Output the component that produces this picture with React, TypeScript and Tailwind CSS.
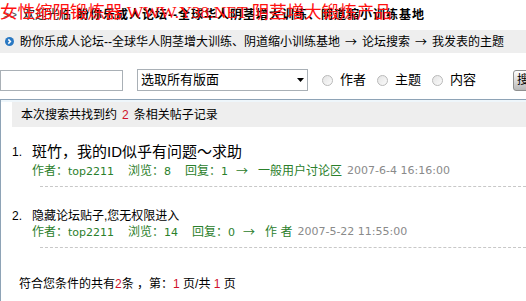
import React from "react";

const CJK = '"Liberation Sans", "Noto Sans CJK SC", sans-serif';
const LATIN = '"DejaVu Sans", "Noto Sans CJK SC", sans-serif';
const ARROW = '"Noto Sans CJK SC", sans-serif';

function Radio({ label }: { label: string }) {
	return (
		<label className="flex shrink-0 items-center">
			<span className="h-[11px] w-[11px] rounded-full border border-[#b9b9b9] bg-gradient-to-br from-[#e4e4e4] to-[#fbfbfb]" />
			<span className="ml-[7px]">{label}</span>
		</label>
	);
}

function Num({ children }: { children: React.ReactNode }) {
	return (
		<span className="text-[11px]" style={{ fontFamily: LATIN }}>
			{children}
		</span>
	);
}

function Arrow({ className }: { className?: string }) {
	return (
		<span className={className} style={{ fontFamily: ARROW }}>
			→
		</span>
	);
}

function Meta({
	author,
	views,
	replies,
	board,
	date,
}: {
	author: string;
	views: number;
	replies: number;
	board: string;
	date: string;
}) {
	return (
		<div className="flex h-[16px] items-center whitespace-nowrap text-[12px] leading-[16px] text-[#2b802b]">
			<span>
				作者：<Num>{author}</Num>
			</span>
			<span className="ml-[14px]">
				浏览：<Num>{views}</Num>
			</span>
			<span className="ml-[14px]">
				回复：<Num>{replies}</Num>
			</span>
			<Arrow className="ml-[8px]" />
			<span className="ml-[10px]">{board}</span>
			<span className="ml-[5px] text-[11px] text-[#8a8a8a]" style={{ fontFamily: LATIN }}>
				{date}
			</span>
		</div>
	);
}

export default function App() {
	return (
		<div
			className="relative h-[301px] w-[526px] overflow-hidden bg-white text-[12px] text-black"
			style={{ fontFamily: CJK }}>
			{/* welcome line */}
			<div className="flex h-[30px] items-center whitespace-nowrap pl-[3px] leading-none">
				<span className="text-[#555]">&gt;&gt;</span>
				<span className="ml-[6px]">欢迎光临</span>
				<span className="ml-[6px] font-bold tracking-[1px]">
					盼你乐成人论坛--全球华人阴茎增大训练、阴道缩小训练基地
				</span>
			</div>
			<div
				className="absolute left-0 top-[2px] whitespace-nowrap text-[17.5px] leading-[20px] text-[#ff1010]"
				style={{ fontFamily: '"Liberation Serif", "Noto Sans CJK SC", serif' }}>
				女性缩阴锻炼器 WWW.Y38.NET 阴茎增大锻炼产品
			</div>

			{/* breadcrumb */}
			<div className="flex h-[23px] items-center whitespace-nowrap bg-[#eeeeee] pl-[5px]">
				<svg width="9" height="9" viewBox="0 0 9 9" className="shrink-0">
					<circle cx="4.5" cy="4.5" r="4.5" fill="#2a78c2" />
					<path d="M3.3 2.4 L5.4 4.5 L3.3 6.6" stroke="#fff" strokeWidth="1.5" fill="none" />
				</svg>
				<span className="ml-[6px] text-[12px]">盼你乐成人论坛--全球华人阴茎增大训练、阴道缩小训练基地</span>
				<Arrow className="mx-[5px]" />
				<span>论坛搜索</span>
				<Arrow className="mx-[5px]" />
				<span>我发表的主题</span>
			</div>

			{/* search form */}
			<div className="mt-[16px] flex h-[22px] items-center whitespace-nowrap">
				<div className="h-[21px] w-[123px] shrink-0 border border-[#a9b0b6] bg-white" />
				<div className="ml-[14px] flex h-[22px] w-[171px] shrink-0 items-center border border-[#a9b0b6] pl-[3px] text-[13px]">
					<span className="flex-1">选取所有版面</span>
					<svg width="7" height="4" viewBox="0 0 7 4" className="mr-[3px]">
						<path d="M0 0 H7 L3.5 4 Z" fill="#000" />
					</svg>
				</div>
				<div className="ml-[14px] flex shrink-0 items-center gap-[11px] text-[13px]">
					<Radio label="作者" />
					<Radio label="主题" />
					<Radio label="内容" />
				</div>
				<div className="ml-[37px] flex h-[21px] w-[40px] shrink-0 items-center rounded-[3px] border border-[#8f8f8f] bg-gradient-to-b from-[#ffffff] to-[#b8b8b8] pl-[3px] text-[12px]">
					搜索
				</div>
			</div>

			{/* results panel */}
			<div className="mt-[8px] border-l border-t border-[#8ea3b6]">
				<div className="h-[2px] bg-[#eef6fb]" />
				<div className="pl-[11px]">
					<div className="flex h-[25px] items-center bg-[#eeeeee] pl-[9px]">
						本次搜索共找到约
						<span className="mx-[5px] text-[#d0102a]">2</span>
						条相关帖子记录
					</div>

					<div className="mt-[16px] flex">
						<span className="w-[20px] text-[12px] leading-[18px]">1.</span>
						<div>
							<div className="text-[15px] leading-[18px]">斑竹，我的ID似乎有问题～求助</div>
							<div className="mt-[2px]">
								<Meta author="top2211" views={8} replies={1} board="一般用户讨论区" date="2007-6-4 16:16:00" />
							</div>
						</div>
					</div>
					<div className="ml-[28px] mt-[7px] border-t border-dashed border-[#c8c8c8]" />

					<div className="mt-[21px] flex">
						<span className="w-[20px] text-[12px] leading-[16px]">2.</span>
						<div>
							<div className="text-[12px] leading-[16px]">隐藏论坛贴子,您无权限进入</div>
							<Meta author="top2211" views={14} replies={0} board="作 者" date="2007-5-22 11:55:00" />
						</div>
					</div>
					<div className="ml-[28px] mt-[7px] border-t border-dashed border-[#c8c8c8]" />

					<div className="mt-[28px] pl-[7px] leading-[16px]">
						符合您条件的共有<span className="text-[#d0102a]">2</span>条 ，第：
						<span className="text-[#d0102a]">1</span> 页/共 <span className="text-[#d0102a]">1</span> 页
					</div>
					<div className="h-[40px]" />
				</div>
			</div>
		</div>
	);
}
